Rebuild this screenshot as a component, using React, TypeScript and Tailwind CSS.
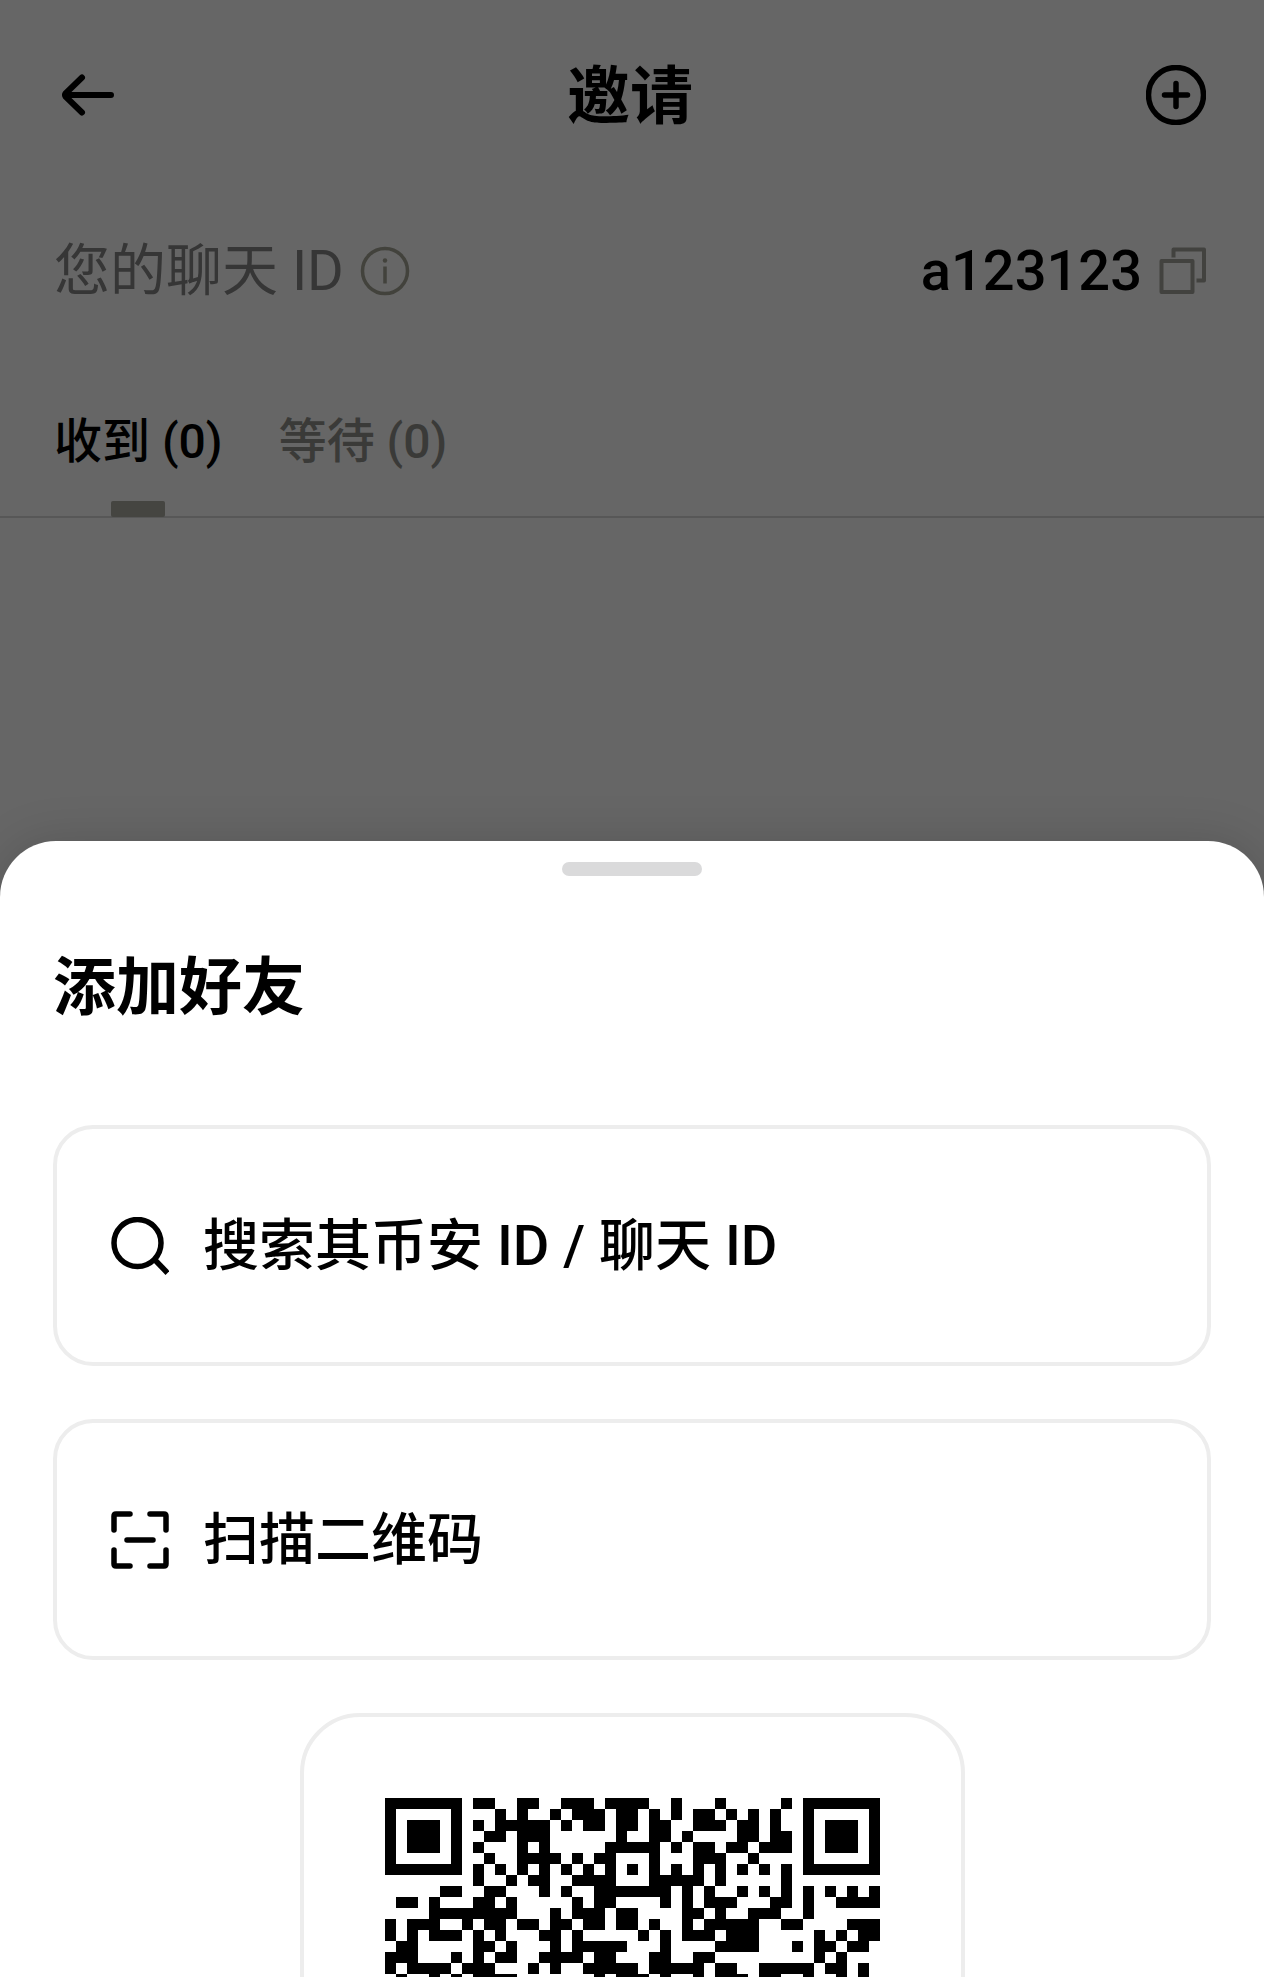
import { useState } from "react";

// dark modules of each QR row, as inclusive column ranges
const qrRows = [
  "0-6 8-9 12-13 16-18 20-23 26 30 36 38-44",
  "0 6 10 12 15 17-19 21-22 24 26 28-29 31 33 35 38 44",
  "0 2-4 6 8 10-14 16 18-19 21-22 24-25 28-30 32-33 35 38 40-42 44",
  "0 2-4 6 9-10 12-14 21 24-25 27 32-33 35-36 38 40-42 44",
  "0 2-4 6 8 12 14 20-24 26 28-29 31-32 34-36 38 40-42 44",
  "0 6 9 12-15 17 19-20 24 28-30 33 38 44",
  "0-6 8 10 12 14 16 18 20 22 24 26 28 30 32 34 36 38-44",
  "8 11 13-14 17-20 24-28 30 36",
  "5-6 9-10 14 16 19-25 27 29 32 34 36 38 40 42 44",
  "1-2 4 8-9 11 17 19-20 25 27 29-31 35-36 38 41-44",
  "4-11 15 17-19 21-22 27-28 30 33-35 38",
  "0 2-4 7 9-10 12-13 15-16 18-19 21-22 24 27 29-33 36-37 42-44",
  "0 2 4-6 8 10 14-15 17 23 25 27-29 31-33 39 41 43-44",
  "1-2 8-9 11 15 17-21 25 30-33 37 39-40 42-43",
  "0-2 6 8 10-11 14-17 19-20 24-25 28-29 39 41",
  "0 2-5 7-9 13 15 18-22 24-28 30-31 34-38 40-41 43",
  "1 4 6 8-11 19 21-23 25 28 30-32 34-35 38 41 43",
];

const tabs = [
  { id: "received", label: "收到 (0)" },
  { id: "pending", label: "等待 (0)" },
];

const iconProps = {
  fill: "none",
  stroke: "currentColor",
  "aria-hidden": true,
} as const;

function BackIcon() {
  return (
    <svg {...iconProps} className="w-[60px] h-[60px]" viewBox="0 0 60 60" strokeWidth="6" strokeLinecap="round" strokeLinejoin="round">
      <path d="M28 12.500 11.500 28.500Q10.500 30 11.500 31.500L28 47.500M12 30H57" />
    </svg>
  );
}

function AddIcon() {
  return (
    <svg {...iconProps} className="w-[60px] h-[60px]" viewBox="0 0 60 60" strokeWidth="5.500" strokeLinecap="round">
      <circle cx="30" cy="30" r="27.500" />
      <path d="M30 18.500V41.500M18.500 30H41.500" />
    </svg>
  );
}

function InfoIcon() {
  return (
    <svg {...iconProps} className="w-[50px] h-[50px]" viewBox="0 0 50 50" strokeWidth="3.500">
      <circle cx="25" cy="25" r="22.500" />
      <path d="M25 20.500V37.500" />
      <circle cx="25" cy="14.500" r="2.200" fill="currentColor" stroke="none" />
    </svg>
  );
}

function CopyIcon() {
  return (
    <svg {...iconProps} className="w-[48px] h-[48px]" viewBox="0 0 48 48" strokeWidth="4" strokeLinejoin="round">
      <rect x="3.500" y="14" width="31" height="31" />
      <path d="M15.500 10.500V2.500H46V33.500H38.500" />
    </svg>
  );
}

function SearchIcon() {
  return (
    <svg {...iconProps} className="w-[58px] h-[58px] shrink-0" viewBox="0 0 58 58" strokeWidth="5.500">
      <circle cx="26.500" cy="26" r="23.500" />
      <path d="M43.500 42.500 56.500 56" />
    </svg>
  );
}

function ScanIcon() {
  return (
    <svg {...iconProps} className="w-[58px] h-[58px] shrink-0" viewBox="0 0 58 58" strokeWidth="5.500" strokeLinecap="round" strokeLinejoin="round">
      <path d="M3 19V5Q3 3 5 3H19M39 3H53Q55 3 55 5V19M55 39V53Q55 55 53 55H39M19 55H5Q3 55 3 53V39M16 29H42" />
    </svg>
  );
}

function QrCode() {
  return (
    <svg className="w-full" viewBox="0 0 45 17" shapeRendering="crispEdges" role="img" aria-label="二维码">
      {qrRows.map((row, y) =>
        row.split(" ").map((range) => {
          const [start, end = start] = range.split("-").map(Number);
          return <rect key={`${y}-${start}`} x={start} y={y} width={end - start + 1} height="1" />;
        })
      )}
    </svg>
  );
}

export default function App() {
  const [active, setActive] = useState("received");

  const card = "w-full h-[241px] flex items-center gap-[34px] px-[54px] border-4 border-[#ededed] rounded-[40px] text-[56px] leading-[80px] font-medium text-left";

  return (
    <div className="h-screen overflow-hidden bg-[#666666] text-black font-[Roboto,'Noto_Sans_CJK_SC',sans-serif]">
      <header className="h-[190px] pl-[54px] pr-[58px] flex items-center justify-between">
        <button type="button" aria-label="返回">
          <BackIcon />
        </button>
        <h1 className="pt-1 text-[63px] leading-[80px] font-bold">邀请</h1>
        <button type="button" aria-label="添加">
          <AddIcon />
        </button>
      </header>

      <section className="h-[162px] pl-[54px] pr-[58px] flex items-center justify-between text-[56px] leading-[80px]">
        <div className="flex items-center gap-4 text-[#363636]">
          <span>您的聊天 ID</span>
          <button type="button" aria-label="说明" className="text-[#42423c]">
            <InfoIcon />
          </button>
        </div>
        <div className="flex items-center gap-4">
          <span className="font-medium">a123123</span>
          <button type="button" aria-label="复制" className="text-[#42423f]">
            <CopyIcon />
          </button>
        </div>
      </section>

      <nav className="h-[166px] px-[54px] flex items-end gap-14 border-b-2 border-[#575757] text-[48px] font-medium">
        {tabs.map((tab) => (
          <button
            key={tab.id}
            type="button"
            onClick={() => setActive(tab.id)}
            className={`relative h-[150px] pt-0.5 ${active === tab.id ? "text-black" : "text-[#3a3a38]"}`}
          >
            {tab.label}
            {active === tab.id && (
              <span className="absolute -bottom-px left-1/2 -translate-x-1/2 w-[54px] h-4 rounded-xs bg-[#454541]" />
            )}
          </button>
        ))}
      </nav>

      <div className="h-[323px]" />

      <section className="bg-white rounded-t-[56px] pt-[21px] px-[53px] shadow-[0_0_48px_rgba(0,0,0,0.15)]">
        <div className="w-[140px] h-[14px] mx-auto rounded-full bg-[#dadadb]" />
        <h2 className="mt-[72px] text-[63px] leading-[80px] font-bold">添加好友</h2>

        <div className="mt-[97px] flex flex-col gap-[53px]">
          <button type="button" className={card}>
            <SearchIcon />
            搜索其币安 ID / 聊天 ID
          </button>
          <button type="button" className={card}>
            <ScanIcon />
            扫描二维码
          </button>
          <div className="w-[665px] max-w-full mx-auto p-[81px] border-4 border-[#ededed] rounded-[60px]">
            <QrCode />
          </div>
        </div>
      </section>
    </div>
  );
}
